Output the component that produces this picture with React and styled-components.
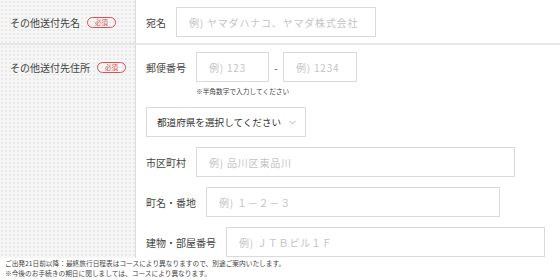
import React from 'react';
import styled, { createGlobalStyle } from 'styled-components';

const Global = createGlobalStyle`
  html, body { margin: 0; padding: 0; background: #fff; }
  body {
    font-family: "Noto Sans CJK JP", "Noto Sans", sans-serif;
    color: #333;
  }
`;

const Page = styled.div`
  width: 560px;
  height: 280px;
  overflow: hidden;
  background: #fff;
`;

const Row = styled.div`
  display: grid;
  grid-template-columns: 136px 1fr;
  border-bottom: ${(p) => (p.$divider ? '2px solid #e6e6e6' : 'none')};
`;

const Head = styled.div`
  background-color: #f6f6f6;
  background-image: radial-gradient(#e8e8e8 0.7px, transparent 0.9px);
  background-size: 4px 4px;
  border-right: 1px solid #dcdcdc;
  padding: 7px 0 0 10px;
`;

const HeadInner = styled.div`
  height: 30px;
  display: flex;
  align-items: center;
  gap: 7px;
  font-size: 10px;
  color: #444;
`;

const Badge = styled.span`
  display: inline-flex;
  align-items: center;
  justify-content: center;
  width: 29px;
  height: 11px;
  box-sizing: border-box;
  border: 1px solid #d9534f;
  border-radius: 6px;
  color: #d9534f;
  font-size: 6.5px;
  line-height: 1;
`;

const Body = styled.div`
  padding: 7px 0 ${(p) => p.$pb}px 10px;
  display: flex;
  flex-direction: column;
`;

const Field = styled.div`
  display: flex;
  align-items: center;
  gap: ${(p) => p.$gap ?? 10}px;
  margin-top: ${(p) => p.$mt ?? 0}px;
`;

const Label = styled.span`
  font-size: 10px;
  color: #444;
  white-space: nowrap;
`;

const Input = styled.input`
  box-sizing: border-box;
  width: ${(p) => p.$w}px;
  height: 30px;
  border: 1px solid #dadada;
  border-radius: 0;
  padding: 0 0 0 12px;
  margin: 0;
  font: inherit;
  font-size: 10px;
  letter-spacing: 0.8px;
  color: #333;
  background: #fff;
  outline: none;
  &::placeholder { color: #c4c4c4; }
`;

const Dash = styled.span`
  width: 4px;
  font-size: 10px;
  color: #555;
  text-align: center;
`;

const Hint = styled.div`
  margin: 4px 0 0 50px;
  height: 10px;
  line-height: 10px;
  font-size: 6.7px;
  color: #444;
`;

const Select = styled.div`
  box-sizing: border-box;
  width: 160px;
  height: 30px;
  margin-top: 11px;
  border: 1px solid #dadada;
  display: flex;
  align-items: center;
  gap: 5px;
  padding: 0 9px 0 10px;
  font-size: 9.6px;
  color: #333;
`;

const SelectText = styled.span`
  flex: 1;
  white-space: nowrap;
`;

const Footer = styled.div`
  padding: 0 0 0 5px;
  font-size: 6.7px;
  line-height: 10px;
  color: #444;
`;

const Chevron = () => (
  <svg width="7" height="5" viewBox="0 0 7 5" fill="none">
    <path d="M0.5 1 L3.5 4 L6.5 1" stroke="#aaa" strokeWidth="0.9" />
  </svg>
);

export default function App() {
  return (
    <Page>
      <Global />
      <Row $divider>
        <Head>
          <HeadInner>
            その他送付先名<Badge>必須</Badge>
          </HeadInner>
        </Head>
        <Body $pb={6}>
          <Field>
            <Label>宛名</Label>
            <Input $w={200} placeholder="例) ヤマダハナコ、ヤマダ株式会社" />
          </Field>
        </Body>
      </Row>
      <Row>
        <Head>
          <HeadInner>
            その他送付先住所<Badge>必須</Badge>
          </HeadInner>
        </Head>
        <Body $pb={1}>
          <Field>
            <Label>郵便番号</Label>
            <Field $gap={5}>
              <Input $w={73} placeholder="例) 123" />
              <Dash>-</Dash>
              <Input $w={74} placeholder="例) 1234" />
            </Field>
          </Field>
          <Hint>※半角数字で入力してください</Hint>
          <Select>
            <SelectText>都道府県を選択してください</SelectText>
            <Chevron />
          </Select>
          <Field $mt={10}>
            <Label>市区町村</Label>
            <Input $w={319} placeholder="例) 品川区東品川" />
          </Field>
          <Field $mt={10}>
            <Label>町名・番地</Label>
            <Input $w={294} placeholder="例) １－２－３" />
          </Field>
          <Field $mt={10}>
            <Label>建物・部屋番号</Label>
            <Input $w={319} placeholder="例) ＪＴＢビル１Ｆ" />
          </Field>
        </Body>
      </Row>
      <Footer>
        <div>ご出発21日前以降：最終旅行日程表はコースにより異なりますので、別途ご案内いたします。</div>
        <div>※今後のお手続きの期日に関しましては、コースにより異なります。</div>
      </Footer>
    </Page>
  );
}
